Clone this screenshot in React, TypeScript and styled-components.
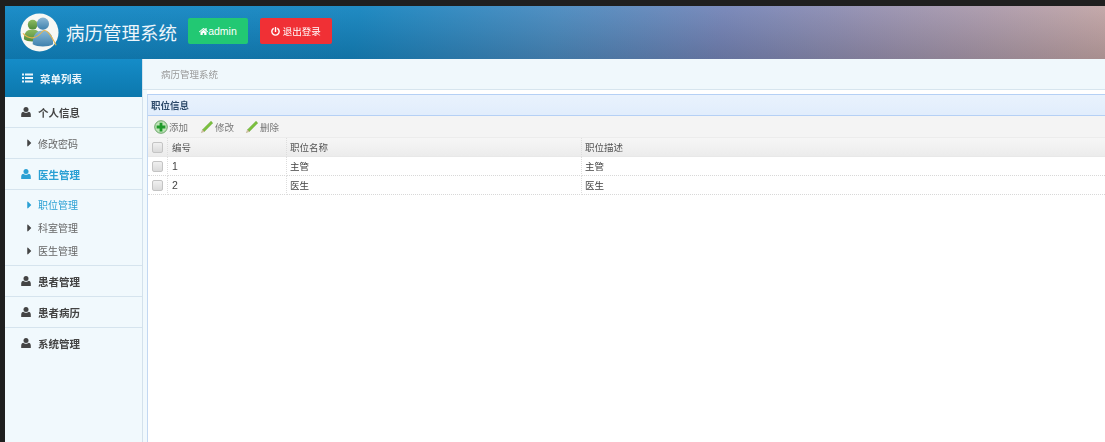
import React from "react";
import styled, { createGlobalStyle } from "styled-components";
import { FaHome, FaPowerOff, FaCaretRight } from "react-icons/fa";

const GlobalStyle = createGlobalStyle`
  html, body {
    margin: 0;
    padding: 0;
    height: 100%;
    background: #1f1f1f;
    overflow: hidden;
  }
  body {
    font-family: "Liberation Sans", "Noto Sans CJK SC", sans-serif;
  }
`;

const Page = styled.div`
  width: 1105px;
  height: 442px;
  padding: 6px 0 0 5px;
  box-sizing: border-box;
  display: flex;
  flex-direction: column;
  overflow: hidden;
  filter: blur(0.45px);
`;

const Header = styled.header`
  height: 53px;
  flex-shrink: 0;
  display: flex;
  align-items: center;
  padding-left: 15px;
  background:
    linear-gradient(to bottom, rgba(255, 255, 255, 0.05), rgba(0, 0, 0, 0.14)),
    linear-gradient(100deg, #1188c6 0%, #1585c0 32%, #4a8bc0 50%, #7585b8 65%, #9a92b0 80%, #c4a6a6 100%);
`;

const Logo = styled.svg`
  width: 39px;
  height: 39px;
  flex-shrink: 0;
`;

const Title = styled.h1`
  margin: 0 0 2px 7px;
  width: 111px;
  font-size: 18.5px;
  font-weight: 400;
  color: #eef6fb;
  white-space: nowrap;
`;

const TopButton = styled.div<{ $bg: string; $w: number; $ml: number; $fs: number }>`
  width: ${(p) => p.$w}px;
  height: 26px;
  margin: 0 0 3px ${(p) => p.$ml}px;
  display: flex;
  align-items: center;
  justify-content: center;
  border-radius: 2px;
  background: ${(p) => p.$bg};
  color: #fff;
  font-size: ${(p) => p.$fs}px;
  svg {
    width: 9px;
    height: 9px;
  }
`;

const Body = styled.div`
  flex: 1;
  display: flex;
  min-height: 0;
`;

const Sidebar = styled.aside`
  width: 138px;
  flex-shrink: 0;
  box-sizing: border-box;
  background: #f1f9fd;
  border-right: 1px solid #d3e1ec;
`;

const SideTitle = styled.div`
  height: 38px;
  display: flex;
  align-items: center;
  padding-left: 17px;
  gap: 7px;
  color: #e9f4fa;
  font-size: 10.5px;
  font-weight: 700;
  background: linear-gradient(to bottom, #158cc8, #0c78ad);
  svg {
    width: 11px;
    height: 10px;
  }
`;

const Group = styled.div`
  border-bottom: 1px solid #d6e4ee;
`;

const GroupHead = styled.div<{ $active?: boolean }>`
  height: 30px;
  display: flex;
  align-items: center;
  padding-left: 16px;
  gap: 7px;
  font-size: 10.5px;
  font-weight: 700;
  color: ${(p) => (p.$active ? "#2aa0d4" : "#444")};
  svg {
    width: 10px;
    height: 10px;
  }
`;

const SubList = styled.div<{ $tall?: boolean }>`
  border-top: 1px solid #d6e4ee;
  padding: ${(p) => (p.$tall ? "3px 0" : "0")};
`;

const SubItem = styled.div<{ $active?: boolean; $h: number }>`
  height: ${(p) => p.$h}px;
  display: flex;
  align-items: center;
  padding-left: 22px;
  gap: 6px;
  font-size: 10px;
  color: ${(p) => (p.$active ? "#2aa0d4" : "#666")};
  svg {
    width: 5px;
    height: 12px;
    color: ${(p) => (p.$active ? "#2aa0d4" : "#444")};
  }
`;

const Main = styled.main`
  flex: 1;
  min-width: 0;
  display: flex;
  flex-direction: column;
  background: #fff;
`;

const Breadcrumb = styled.div`
  height: 30px;
  flex-shrink: 0;
  display: flex;
  align-items: center;
  padding-left: 18px;
  background: #f0f8fc;
  border-bottom: 1px solid #d7e5ee;
  color: #9a9a9a;
  font-size: 9.5px;
`;

const PanelArea = styled.div`
  flex: 1;
  display: flex;
  padding: 4px 0 0 4px;
  min-height: 0;
  background: linear-gradient(to right, #f1f9fd 4px, #fff 4px);
`;

const Panel = styled.section`
  flex: 1;
  min-width: 0;
  background: #fff;
  border-left: 1px solid #c3d8f2;
  border-top: 1px solid #b5d0f5;
`;

const PanelTitle = styled.div`
  height: 20px;
  display: flex;
  align-items: center;
  padding-left: 3px;
  font-size: 9.5px;
  font-weight: 700;
  color: #2d4a6a;
  background: linear-gradient(to bottom, #e9f2fd, #e1edfc);
  border-bottom: 1px solid #b5d0f5;
`;

const Toolbar = styled.div`
  height: 21px;
  display: flex;
  align-items: center;
  padding-left: 6px;
  background: #f4f4f4;
  border-bottom: 1px solid #ececec;
`;

const ToolButton = styled.div<{ $w: number }>`
  width: ${(p) => p.$w}px;
  display: flex;
  align-items: center;
  gap: 1px;
  font-size: 9.5px;
  color: #777;
  svg {
    width: 14px;
    height: 14px;
    flex-shrink: 0;
  }
`;

const Table = styled.div`
  display: grid;
  grid-template-columns: 20px 119px 295px 1fr;
`;

const Cell = styled.div<{ $head?: boolean; $pad?: number; $fs?: number }>`
  height: 18px;
  display: flex;
  align-items: center;
  padding-left: ${(p) => p.$pad ?? 3}px;
  font-size: ${(p) => p.$fs ?? 9.5}px;
  color: ${(p) => (p.$head ? "#555" : "#444")};
  background: ${(p) => (p.$head ? "linear-gradient(to bottom, #f6f6f6, #ececec)" : "#fff")};
  border-right: 1px dotted #ddd;
  border-bottom: 1px ${(p) => (p.$head ? "solid #e8e8e8" : "dotted #d8d8d8")};
  &:nth-child(4n) {
    border-right: 0;
  }
`;

const Check = styled.span`
  width: 9px;
  height: 9px;
  border: 1px solid #c4c4c4;
  border-radius: 2px;
  background: linear-gradient(to bottom, #f0f0f0, #dadada);
`;

const ListIcon = () => (
  <svg viewBox="0 0 11 10">
    <path d="M0 .5h2v2H0zM3 .5h8v2H3zM0 4h2v2H0zM3 4h8v2H3zM0 7.5h2v2H0zM3 7.5h8v2H3z" fill="currentColor" />
  </svg>
);

const PersonIcon = () => (
  <svg viewBox="0 0 10 10">
    <circle cx="5" cy="2.6" r="2.5" fill="currentColor" />
    <path d="M.2 10V7.6C.2 5.9 1.2 5 2.4 4.8 3 5.4 4 5.8 5 5.8s2-.4 2.6-1C8.8 5 9.8 5.9 9.8 7.6V10z" fill="currentColor" />
  </svg>
);

const PlusIcon = () => (
  <svg viewBox="0 0 16 16">
    <circle cx="8" cy="8" r="7.2" fill="#bfe3b8" stroke="#5a9a58" strokeWidth="1" />
    <path d="M6.4 3h3.2v3.4H13v3.2H9.6V13H6.4V9.6H3V6.4h3.4z" fill="#1f9a2a" />
  </svg>
);

const PencilIcon = () => (
  <svg viewBox="0 0 16 16">
    <path d="M12.6 1.5l1.9 1.9L5 13 3 11z" fill="#7cc23c" stroke="#5a9f2a" strokeWidth="0.6" />
    <path d="M3 11L1.6 14.4 5 13z" fill="#e3d6ae" stroke="#8a7a50" strokeWidth="0.4" />
  </svg>
);

const LogoMark = () => (
  <Logo viewBox="0 0 40 40">
    <defs>
      <linearGradient id="logoGreen" x1="0" y1="0" x2="0" y2="1">
        <stop offset="0" stopColor="#8dbb62" />
        <stop offset="1" stopColor="#4f8a3a" />
      </linearGradient>
      <linearGradient id="logoBlue" x1="0" y1="0" x2="0" y2="1">
        <stop offset="0" stopColor="#8ab8d6" />
        <stop offset="1" stopColor="#3f81ad" />
      </linearGradient>
    </defs>
    <circle cx="20" cy="20" r="19.5" fill="#f8f8f4" />
    <circle cx="13" cy="12" r="5" fill="url(#logoGreen)" />
    <path d="M4 27c0-7 3-10 9-10 5 0 8 3 8 10-4 3-13 3-17 0z" fill="url(#logoGreen)" />
    <circle cx="23.5" cy="11" r="6.3" fill="url(#logoBlue)" />
    <path d="M13 32c0-10 4-14 10.5-14S34 22 34 32c-5 3-16 3-21 0z" fill="url(#logoBlue)" />
    <path d="M3 21c8 8 15 4 20-2 3-3 7 0 14 14" fill="none" stroke="#e6b54c" strokeWidth="1.1" />
  </Logo>
);

const rows = [
  { id: "1", name: "主管", desc: "主管" },
  { id: "2", name: "医生", desc: "医生" },
];

export default function App() {
  return (
    <Page>
      <GlobalStyle />
      <Header>
        <LogoMark />
        <Title>病历管理系统</Title>
        <TopButton $bg="#22c873" $w={60} $ml={11} $fs={10.5}>
          <FaHome />
          admin
        </TopButton>
        <TopButton $bg="#f03035" $w={72} $ml={12} $fs={9.5}>
          <FaPowerOff />
          &nbsp;退出登录
        </TopButton>
      </Header>
      <Body>
        <Sidebar>
          <SideTitle>
            <ListIcon />
            菜单列表
          </SideTitle>
          <Group>
            <GroupHead>
              <PersonIcon />
              个人信息
            </GroupHead>
            <SubList>
              <SubItem $h={30}>
                <FaCaretRight />
                修改密码
              </SubItem>
            </SubList>
          </Group>
          <Group>
            <GroupHead $active>
              <PersonIcon />
              医生管理
            </GroupHead>
            <SubList $tall>
              <SubItem $h={23} $active>
                <FaCaretRight />
                职位管理
              </SubItem>
              <SubItem $h={23}>
                <FaCaretRight />
                科室管理
              </SubItem>
              <SubItem $h={23}>
                <FaCaretRight />
                医生管理
              </SubItem>
            </SubList>
          </Group>
          <Group>
            <GroupHead>
              <PersonIcon />
              患者管理
            </GroupHead>
          </Group>
          <Group>
            <GroupHead>
              <PersonIcon />
              患者病历
            </GroupHead>
          </Group>
          <GroupHead>
            <PersonIcon />
            系统管理
          </GroupHead>
        </Sidebar>
        <Main>
          <Breadcrumb>病历管理系统</Breadcrumb>
          <PanelArea>
            <Panel>
              <PanelTitle>职位信息</PanelTitle>
              <Toolbar>
                <ToolButton $w={46}>
                  <PlusIcon />
                  添加
                </ToolButton>
                <ToolButton $w={45}>
                  <PencilIcon />
                  修改
                </ToolButton>
                <ToolButton $w={45}>
                  <PencilIcon />
                  删除
                </ToolButton>
              </Toolbar>
              <Table>
                <Cell $head $pad={4}>
                  <Check />
                </Cell>
                <Cell $head $pad={4}>编号</Cell>
                <Cell $head>职位名称</Cell>
                <Cell $head>职位描述</Cell>
                {rows.map((row) => (
                  <React.Fragment key={row.id}>
                    <Cell $pad={4}>
                      <Check />
                    </Cell>
                    <Cell $pad={4} $fs={10.5}>{row.id}</Cell>
                    <Cell>{row.name}</Cell>
                    <Cell>{row.desc}</Cell>
                  </React.Fragment>
                ))}
              </Table>
            </Panel>
          </PanelArea>
        </Main>
      </Body>
    </Page>
  );
}
